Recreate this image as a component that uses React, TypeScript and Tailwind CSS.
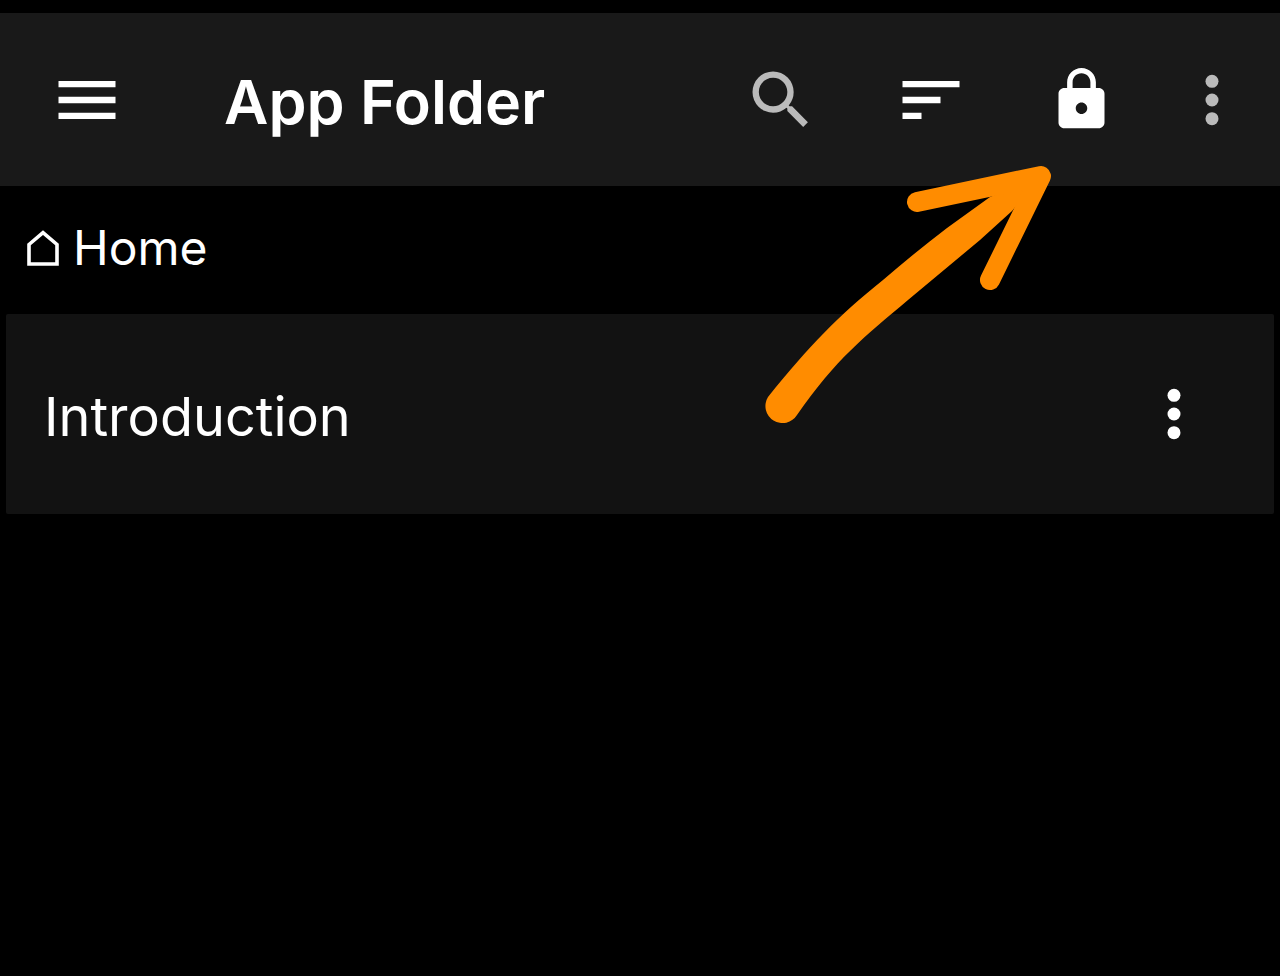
type IconProps = { className: string };

function MenuIcon({ className }: IconProps) {
  return (
    <svg viewBox="0 0 24 24" fill="currentColor" className={className} aria-hidden="true">
      <path d="M3 18h18v-2H3v2zm0-5h18v-2H3v2zm0-7v2h18V6H3z" />
    </svg>
  );
}

function SearchIcon({ className }: IconProps) {
  return (
    <svg viewBox="0 0 24 24" fill="currentColor" className={className} aria-hidden="true">
      <path d="M15.5 14h-.79l-.28-.27A6.471 6.471 0 0 0 16 9.5 6.5 6.5 0 1 0 9.5 16c1.61 0 3.09-.59 4.23-1.57l.27.28v.79l5 4.99L20.49 19l-4.99-5zm-6 0C7.01 14 5 11.99 5 9.5S7.01 5 9.5 5 14 7.01 14 9.5 11.99 14 9.5 14z" />
    </svg>
  );
}

function SortIcon({ className }: IconProps) {
  return (
    <svg viewBox="0 0 24 24" fill="currentColor" className={className} aria-hidden="true">
      <path d="M3 18h6v-2H3v2zM3 6v2h18V6H3zm0 7h12v-2H3v2z" />
    </svg>
  );
}

function LockIcon({ className }: IconProps) {
  return (
    <svg viewBox="0 0 24 24" fill="currentColor" className={className} aria-hidden="true">
      <path d="M18 8h-1V6c0-2.76-2.24-5-5-5S7 3.24 7 6v2H6c-1.1 0-2 .9-2 2v10c0 1.1.9 2 2 2h12c1.1 0 2-.9 2-2V10c0-1.1-.9-2-2-2zm-6 9c-1.1 0-2-.9-2-2s.9-2 2-2 2 .9 2 2-.9 2-2 2zm3.1-9H8.9V6c0-1.71 1.39-3.1 3.1-3.1s3.1 1.39 3.1 3.1v2z" />
    </svg>
  );
}

function MoreIcon({ className }: IconProps) {
  return (
    <svg viewBox="0 0 24 24" fill="currentColor" className={className} aria-hidden="true">
      <circle cx="12" cy="6.1" r="2.05" />
      <circle cx="12" cy="12" r="2.05" />
      <circle cx="12" cy="17.9" r="2.05" />
    </svg>
  );
}

function HomeIcon({ className }: IconProps) {
  return (
    <svg viewBox="0 0 32 36" fill="none" stroke="currentColor" strokeWidth="3.6" className={className} aria-hidden="true">
      <path d="M2 14.5 16 2.6 30 14.5V34H2z" />
    </svg>
  );
}

function PointerArrow({ className }: IconProps) {
  return (
    <svg viewBox="764 160 288 264" className={className} aria-hidden="true">
      <path
        fill="#ff8c00"
        d="M768 397C811 344 836 318 883 280C905 261 926 244 947 228L990 197L1041 176L1012 211L980 240L908 300C863 338 837 358 797 415A17 17 0 1 1 768 397Z"
      />
      <path
        fill="none"
        stroke="#ff8c00"
        strokeWidth="20"
        strokeLinecap="round"
        strokeLinejoin="round"
        d="M917 202 1041 176 990 280"
      />
    </svg>
  );
}

const files = ["Introduction"];

export default function App() {
  return (
    <div className="relative min-h-screen bg-black pt-[13px] font-['Inter','Liberation_Sans',sans-serif] text-white">
      <header className="flex h-[173px] items-center bg-[#191919] pr-3">
        <button type="button" aria-label="Open menu" className="flex w-[174px] shrink-0 justify-center">
          <MenuIcon className="size-[76px]" />
        </button>
        <h1 className="min-w-0 flex-1 truncate pt-1 pl-[50px] text-[61px] leading-[80px] font-semibold">App Folder</h1>
        <button type="button" aria-label="Search" className="flex w-[150px] shrink-0 justify-center text-[#bababa]">
          <SearchIcon className="size-[76px]" />
        </button>
        <button type="button" aria-label="Sort" className="flex w-[150px] shrink-0 justify-center">
          <SortIcon className="size-[76px]" />
        </button>
        <button type="button" aria-label="Lock" className="flex w-[150px] shrink-0 justify-center">
          <LockIcon className="size-[69px]" />
        </button>
        <button type="button" aria-label="More options" className="flex w-28 shrink-0 justify-center text-[#bababa]">
          <MoreIcon className="size-[76px]" />
        </button>
      </header>

      <nav aria-label="Breadcrumb" className="flex h-32 items-center px-[27px] pb-1">
        <a href="#home" className="flex items-center gap-3.5">
          <HomeIcon className="h-9 w-8" />
          <span className="text-[48px] leading-[60px]">Home</span>
        </a>
      </nav>

      <main className="px-1.5">
        <ul>
          {files.map((name) => (
            <li key={name} className="flex h-[200px] items-center rounded-xs bg-[#121212] pr-[62px] pl-[38px]">
              <a href="#introduction" className="min-w-0 flex-1 truncate pt-1.5 text-[54px] leading-[72px]">
                {name}
              </a>
              <button type="button" aria-label={`Options for ${name}`} className="shrink-0">
                <MoreIcon className="size-[76px]" />
              </button>
            </li>
          ))}
        </ul>
      </main>

      <PointerArrow className="pointer-events-none absolute top-40 right-[228px] h-[264px] w-72" />
    </div>
  );
}
